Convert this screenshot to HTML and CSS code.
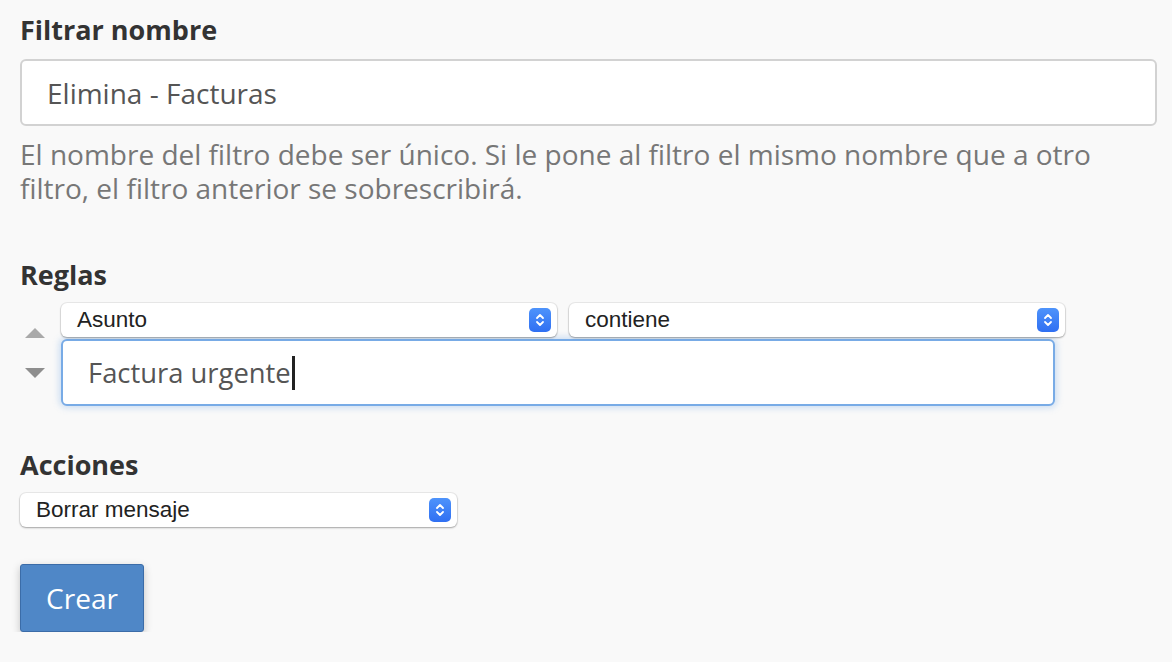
FILE: index.html
```html
<!DOCTYPE html>
<html lang="es">
<head>
<meta charset="utf-8">
<title>Filtro</title>
<link rel="stylesheet" href="styles.css">
</head>
<body>
<div class="page">
  <h2 class="label first">Filtrar nombre</h2>
  <div class="text-input">Elimina - Facturas</div>
  <p class="help">El nombre del filtro debe ser único. Si le pone al filtro el mismo nombre que a otro filtro, el filtro anterior se sobrescribirá.</p>

  <h2 class="label rules-label">Reglas</h2>
  <div class="rule">
    <div class="movers">
      <span class="arrow up"></span>
      <span class="arrow down"></span>
    </div>
    <div class="rule-body">
      <div class="selects">
        <div class="select wide">
          <span class="select-text">Asunto</span>
          <span class="stepper"><svg width="12" height="16" viewBox="0 0 12 16"><path d="M3 6 L6 3 L9 6 M3 10 L6 13 L9 10" fill="none" stroke="#fff" stroke-width="1.8" stroke-linecap="round" stroke-linejoin="round"/></svg></span>
        </div>
        <div class="select wide">
          <span class="select-text">contiene</span>
          <span class="stepper"><svg width="12" height="16" viewBox="0 0 12 16"><path d="M3 6 L6 3 L9 6 M3 10 L6 13 L9 10" fill="none" stroke="#fff" stroke-width="1.8" stroke-linecap="round" stroke-linejoin="round"/></svg></span>
        </div>
      </div>
      <div class="text-input focused">Factura urgente<span class="caret"></span></div>
    </div>
  </div>

  <h2 class="label actions-label">Acciones</h2>
  <div class="select action">
    <span class="select-text">Borrar mensaje</span>
    <span class="stepper"><svg width="12" height="16" viewBox="0 0 12 16"><path d="M3 6 L6 3 L9 6 M3 10 L6 13 L9 10" fill="none" stroke="#fff" stroke-width="1.8" stroke-linecap="round" stroke-linejoin="round"/></svg></span>
  </div>

  <button class="btn" type="button">Crear</button>
</div>
</body>
</html>
```

FILE: styles.css
```css
html, body {
  margin: 0;
  padding: 0;
  background: #f9f9f9;
}

.page {
  padding: 0 15px 0 20px;
  font-family: "Open Sans", "Noto Sans", sans-serif;
  color: #333;
}

.label {
  margin: 0;
  font-size: 27px;
  font-weight: 700;
  line-height: 34px;
  color: #333;
}

.label.first {
  padding-top: 13px;
  margin-bottom: 12px;
}

.text-input {
  box-sizing: border-box;
  height: 67px;
  border: 2px solid #d2d2d2;
  border-radius: 6px;
  background: #fff;
  padding: 0 25px;
  display: flex;
  align-items: center;
  font-size: 28px;
  color: #555;
}

.help {
  margin: 11px 0 0;
  font-size: 28px;
  line-height: 34px;
  color: #777;
}

.rules-label {
  margin-top: 53px;
}

.rule {
  display: flex;
  margin-top: 11px;
}

.movers {
  box-sizing: border-box;
  width: 41px;
  flex: none;
  display: flex;
  flex-direction: column;
  align-items: flex-start;
  padding-top: 25px;
  padding-left: 5px;
  gap: 30px;
}

.arrow {
  width: 0;
  height: 0;
  border-left: 10px solid transparent;
  border-right: 10px solid transparent;
}

.arrow.up {
  border-bottom: 10px solid #a9a9a9;
}

.arrow.down {
  border-top: 10px solid #8e8e8e;
}

.rule-body {
  width: 994px;
}

.selects {
  display: flex;
  gap: 12px;
  width: 1004px;
}

.select {
  box-sizing: border-box;
  height: 34px;
  background: #fff;
  border-radius: 6px;
  box-shadow: 0 0 0 1px rgba(0,0,0,0.06), 0 1px 2px rgba(0,0,0,0.3);
  display: flex;
  align-items: center;
  justify-content: space-between;
  padding: 0 6px 0 16px;
  font-family: "Liberation Sans", Arial, sans-serif;
  font-size: 22.5px;
  color: #222;
}

.select.wide {
  flex: 1;
}

.select.action {
  width: 437px;
  margin-top: 11px;
}

.stepper {
  width: 22px;
  height: 24px;
  border-radius: 5px;
  background: linear-gradient(#4e93fb, #2f6ff2);
  display: flex;
  align-items: center;
  justify-content: center;
}

.text-input.focused {
  margin-top: 2px;
  border: 2px solid #78abe6;
  box-shadow: 0 0 6px 2px rgba(120,171,230,0.35);
  color: #555;
  font-size: 27.4px;
}

.caret {
  display: inline-block;
  width: 3px;
  height: 34px;
  background: #222;
  margin-left: 1px;
}

.actions-label {
  margin-top: 42px;
}

.btn {
  margin-top: 37px;
  width: 124px;
  height: 68px;
  border: 1px solid #3b6ca8;
  border-radius: 3px;
  background: #4f87c7;
  color: #fff;
  font-family: "Open Sans", "Noto Sans", sans-serif;
  font-size: 28px;
  box-shadow: 0 3px 8px rgba(0,0,0,0.22);
  display: block;
  padding: 0;
}
```
